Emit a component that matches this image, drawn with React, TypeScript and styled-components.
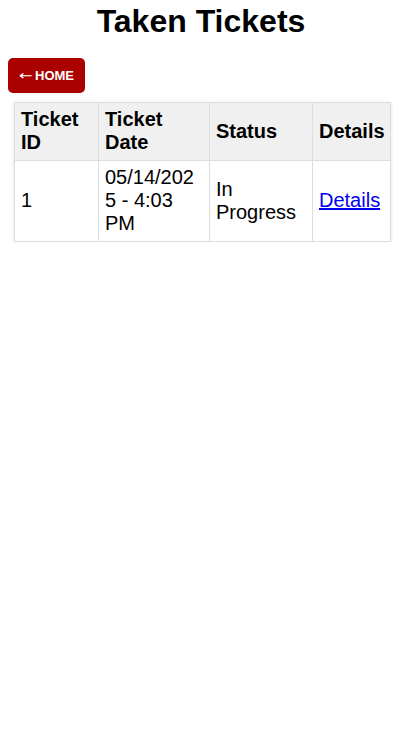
import React from "react";
import styled, { createGlobalStyle } from "styled-components";

const Global = createGlobalStyle`
  body {
    margin: 8px;
    font-family: "Liberation Sans", Arial, sans-serif;
    background: #fff;
    color: #000;
  }
`;

const Title = styled.h1`
  font-size: 32px;
  font-weight: bold;
  text-align: center;
  margin: -5px 0 18px 0;
  line-height: 37px;
`;

const HomeButton = styled.button`
  display: inline-flex;
  align-items: center;
  gap: 4px;
  height: 35px;
  padding: 0 11px 0 9px;
  background: #aa0000;
  color: #fff;
  border: none;
  border-radius: 5px;
  font-family: "Liberation Sans", Arial, sans-serif;
  font-weight: bold;
  font-size: 13px;
  cursor: pointer;
`;

const Arrow = styled.span`
  display: inline-block;
  width: 14px;
  font-family: "DejaVu Sans", sans-serif;
  font-weight: normal;
  font-size: 13px;
  transform: scaleX(1.25);
  transform-origin: left center;
`;

const Table = styled.table`
  border-collapse: collapse;
  table-layout: fixed;
  margin: 9px 0 0 6px;
  width: 376px;
  box-shadow: 0 1px 4px rgba(0, 0, 0, 0.12);
  font-size: 20px;
  line-height: 23px;
`;

const Th = styled.th<{ $w: number }>`
  box-sizing: border-box;
  width: ${(p) => p.$w}px;
  background: #f0f0f0;
  border: 1px solid #dddddd;
  padding: 5px 6px 6px;
  text-align: left;
  font-weight: bold;
  vertical-align: middle;
`;

const Td = styled.td`
  border: 1px solid #dddddd;
  padding: 5px 6px 6px;
  text-align: left;
  vertical-align: middle;
  overflow-wrap: anywhere;
`;

const Link = styled.a`
  color: #0000ee;
  text-decoration: underline;
`;

export default function App() {
  return (
    <>
      <Global />
      <Title>Taken Tickets</Title>
      <HomeButton>
        <Arrow>←</Arrow>HOME
      </HomeButton>
      <Table>
        <thead>
          <tr>
            <Th $w={84}>Ticket ID</Th>
            <Th $w={111}>Ticket Date</Th>
            <Th $w={103}>Status</Th>
            <Th $w={78}>Details</Th>
          </tr>
        </thead>
        <tbody>
          <tr>
            <Td>1</Td>
            <Td>05/14/2025 - 4:03 PM</Td>
            <Td>In Progress</Td>
            <Td>
              <Link href="#">Details</Link>
            </Td>
          </tr>
        </tbody>
      </Table>
    </>
  );
}
